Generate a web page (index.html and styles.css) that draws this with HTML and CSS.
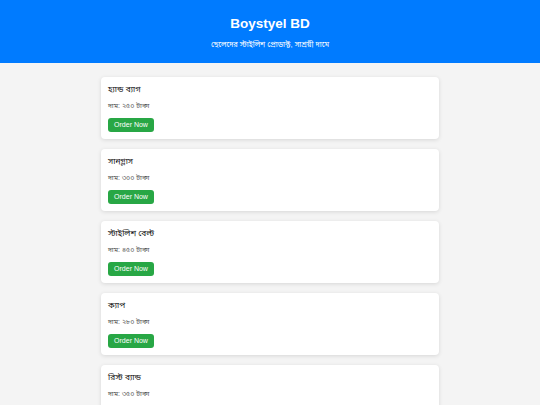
FILE: index.html
```html
<!DOCTYPE html>
<html lang="bn">
<head>
<meta charset="utf-8">
<title>Boystyel BD</title>
<link rel="stylesheet" href="styles.css">
</head>
<body>
<header class="site-header">
  <h1 class="brand">Boystyel BD</h1>
  <p class="tagline">ছেলেদের স্টাইলিশ প্রোডাক্ট, সাশ্রয়ী দামে</p>
</header>
<main class="products">
  <div class="card">
    <h2 class="card-title">হ্যান্ড ব্যাগ</h2>
    <p class="card-price">দাম: ২৫০ টাকা</p>
    <button class="order-btn">Order Now</button>
  </div>
  <div class="card">
    <h2 class="card-title">সানগ্লাস</h2>
    <p class="card-price">দাম: ৩০০ টাকা</p>
    <button class="order-btn">Order Now</button>
  </div>
  <div class="card">
    <h2 class="card-title">স্টাইলিশ বেল্ট</h2>
    <p class="card-price">দাম: ৪৫০ টাকা</p>
    <button class="order-btn">Order Now</button>
  </div>
  <div class="card">
    <h2 class="card-title">ক্যাপ</h2>
    <p class="card-price">দাম: ২৮০ টাকা</p>
    <button class="order-btn">Order Now</button>
  </div>
  <div class="card">
    <h2 class="card-title">রিস্ট ব্যান্ড</h2>
    <p class="card-price">দাম: ৩৫০ টাকা</p>
    <button class="order-btn">Order Now</button>
  </div>
</main>
</body>
</html>
```
FILE: styles.css
```css
* { box-sizing: border-box; }
body {
  margin: 0;
  background: #f4f4f4;
  font-family: "Liberation Sans", Arial, "Noto Sans Bengali", "Lohit Bengali", "Noto Sans", sans-serif;
  color: #222;
}
.site-header {
  background: #007bff;
  color: #fff;
  text-align: center;
  padding: 16px 0 13px;
}
.brand {
  margin: 0 0 7px;
  font-size: 13.5px;
  line-height: 16px;
  font-weight: bold;
}
.tagline {
  margin: 0;
  font-size: 7.5px;
  line-height: 11px;
}
.products {
  padding-top: 14px;
  display: flex;
  flex-direction: column;
  align-items: center;
  gap: 10px;
}
.card {
  width: 338px;
  background: #fff;
  border-radius: 4px;
  box-shadow: 0 1px 4px rgba(0,0,0,0.12);
  padding: 6px 7px 7px;
  display: flex;
  flex-direction: column;
  align-items: flex-start;
}
.card-title {
  margin: 0 0 5px;
  font-size: 8.3px;
  line-height: 13px;
  font-weight: normal;
  color: #111;
}
.card-price {
  margin: 0 0 7px;
  font-size: 7px;
  line-height: 10px;
  color: #555;
}
.order-btn {
  width: 46px;
  height: 14px;
  padding: 0;
  border: none;
  border-radius: 3px;
  background: #28a745;
  color: #fff;
  font-family: "Liberation Sans", Arial, sans-serif;
  font-size: 7px;
  line-height: 14px;
}
```
